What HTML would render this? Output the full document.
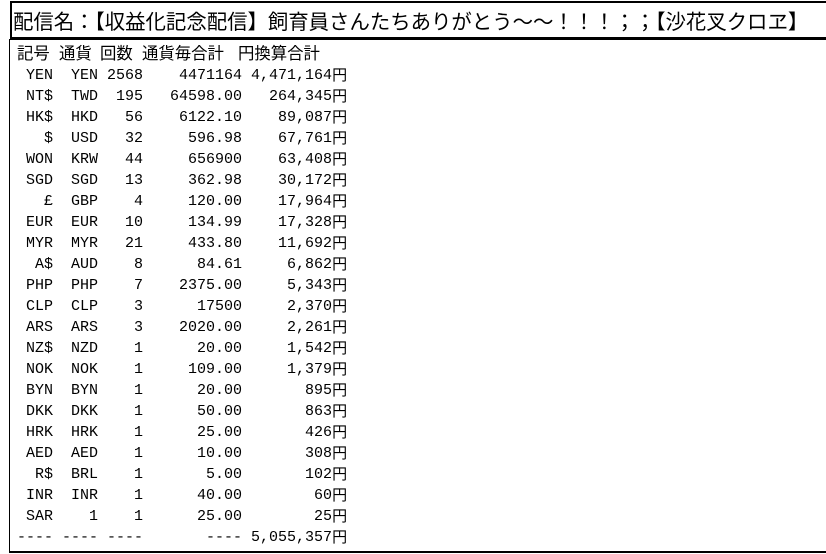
<!DOCTYPE html>
<html><head><meta charset="utf-8"><style>
html,body{margin:0;padding:0;background:#fff;width:826px;height:554px;overflow:hidden;position:relative;}
.title{position:absolute;left:10px;top:1px;width:816px;height:34px;border-top:2px solid #000;border-left:2px solid #000;border-bottom:3px solid #000;box-sizing:content-box;}
.title span{position:absolute;left:1px;top:3px;font-family:"Noto Sans CJK JP",sans-serif;font-size:20.4px;line-height:28px;white-space:nowrap;color:#000;}
.box{position:absolute;left:9px;top:39px;width:817px;height:512px;border-left:1px solid #000;border-bottom:2px solid #000;}
.h{position:absolute;top:44px;font-family:"Liberation Sans","Noto Sans CJK JP",sans-serif;font-size:16.4px;line-height:20px;color:#000;white-space:nowrap;}
.rows{position:absolute;left:17px;top:65px;}
.rows div{height:21px;line-height:21px;overflow:visible;white-space:pre;font-family:"Liberation Mono",monospace;font-size:15px;color:#000;}
.rows i{font-style:normal;font-family:"Noto Sans CJK JP",sans-serif;font-size:15px;line-height:15px;display:inline-block;vertical-align:-1px;}
</style></head><body>
<div class="title"><span>配信名：【収益化記念配信】飼育員さんたちありがとう～～！！！；；【沙花叉クロヱ】</span></div>
<div class="box"></div>
<div class="h" style="left:17px">記号</div>
<div class="h" style="left:59px">通貨</div>
<div class="h" style="left:100px">回数</div>
<div class="h" style="left:142px">通貨毎合計</div>
<div class="h" style="left:238px">円換算合計</div>
<div class="rows">
<div> YEN  YEN 2568    4471164 4,471,164<i>円</i></div>
<div> NT$  TWD  195   64598.00   264,345<i>円</i></div>
<div> HK$  HKD   56    6122.10    89,087<i>円</i></div>
<div>   $  USD   32     596.98    67,761<i>円</i></div>
<div> WON  KRW   44     656900    63,408<i>円</i></div>
<div> SGD  SGD   13     362.98    30,172<i>円</i></div>
<div>   £  GBP    4     120.00    17,964<i>円</i></div>
<div> EUR  EUR   10     134.99    17,328<i>円</i></div>
<div> MYR  MYR   21     433.80    11,692<i>円</i></div>
<div>  A$  AUD    8      84.61     6,862<i>円</i></div>
<div> PHP  PHP    7    2375.00     5,343<i>円</i></div>
<div> CLP  CLP    3      17500     2,370<i>円</i></div>
<div> ARS  ARS    3    2020.00     2,261<i>円</i></div>
<div> NZ$  NZD    1      20.00     1,542<i>円</i></div>
<div> NOK  NOK    1     109.00     1,379<i>円</i></div>
<div> BYN  BYN    1      20.00       895<i>円</i></div>
<div> DKK  DKK    1      50.00       863<i>円</i></div>
<div> HRK  HRK    1      25.00       426<i>円</i></div>
<div> AED  AED    1      10.00       308<i>円</i></div>
<div>  R$  BRL    1       5.00       102<i>円</i></div>
<div> INR  INR    1      40.00        60<i>円</i></div>
<div> SAR    1    1      25.00        25<i>円</i></div>
<div>---- ---- ----       ---- 5,055,357<i>円</i></div>
</div>
</body></html>
